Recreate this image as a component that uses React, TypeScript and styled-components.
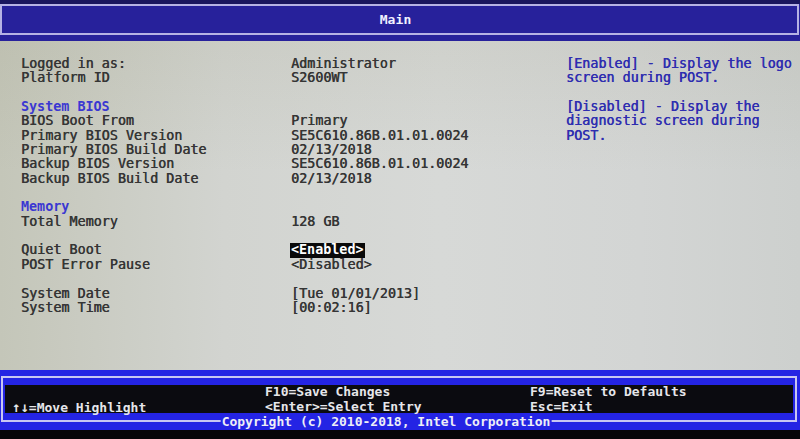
import React from "react";
import styled, { createGlobalStyle } from "styled-components";

const Global = createGlobalStyle`
  html, body { margin: 0; padding: 0; background: #000; }
  body { width: 800px; height: 439px; overflow: hidden; }
`;

const Screen = styled.div`
  width: 800px;
  height: 439px;
  display: flex;
  flex-direction: column;
  background: #000;
  font-family: "DejaVu Sans Mono", "Liberation Mono", monospace;
`;

const TopBar = styled.header`
  flex: none;
  background: #27219b;
  border-top: 4px solid #1a165e;
  padding: 0 1px 6px 0;
`;

const TitleFrame = styled.div`
  height: 27px;
  border: 2px solid #b6b2e4;
  display: flex;
  align-items: center;
  justify-content: center;
  padding-right: 8px;
`;

const Title = styled.h1`
  margin: 0;
  font-size: 13px;
  font-weight: bold;
  color: #f2f2ff;
  letter-spacing: 0.1px;
`;

const Content = styled.main`
  flex: 1;
  display: flex;
  padding-top: 16px;
  background:
    linear-gradient(180deg, rgba(150, 150, 120, 0.12) 0%, rgba(255, 255, 255, 0) 40%),
    linear-gradient(90deg, #c4c6b9 0%, #d2d4d0 28%, #d7d9d7 55%, #d3d5d4 80%, #cdd0ce 100%);
  font-size: 13.4px;
  text-shadow: 0.4px 0 currentColor;
`;

const MainColumn = styled.section`
  width: 545px;
  padding-left: 21px;
  box-sizing: border-box;
`;

const Row = styled.div`
  display: grid;
  grid-template-columns: 270px auto;
  height: 14.35px;
  line-height: 14.35px;
  color: #353535;
  white-space: pre;
`;

const Spacer = styled.div`
  height: 14.35px;
`;

const SectionTitle = styled.div`
  height: 14.35px;
  line-height: 14.35px;
  color: #3b38d2;
  font-weight: bold;
  text-shadow: none;
`;

const Value = styled.span<{ $selected?: boolean }>`
  justify-self: start;
  ${(p) =>
    p.$selected
      ? `background: #0a0a0a; color: #ffffff; font-weight: bold; padding: 0 1px; margin-left: -1px; text-shadow: none;`
      : ``}
`;

const HelpColumn = styled.aside`
  flex: 1;
  padding-left: 21px;
  color: #2e2db0;
`;

const HelpLine = styled.div`
  height: 14.35px;
  line-height: 14.35px;
  white-space: pre;
`;

const Footer = styled.footer`
  flex: none;
  background: #2424e4;
  padding: 6px 3px 8px 1px;
`;

const Frame = styled.div`
  position: relative;
  border: 2px solid #c8c6f2;
  padding: 7px 2px 7px 2px;
`;

const KeyPanel = styled.div`
  height: 28px;
  background: #0b0b10;
  display: grid;
  grid-template-columns: 253px 265px auto;
  padding-left: 7px;
  font-size: 13px;
  font-weight: bold;
  color: #e6e6ea;
`;

const KeyColumn = styled.div<{ $shift?: number }>`
  display: flex;
  flex-direction: column;
  justify-content: flex-end;
  margin-top: ${(p) => p.$shift ?? 0}px;
`;

const KeyLine = styled.div`
  height: 14.5px;
  line-height: 14.5px;
  white-space: pre;
`;

const Arrows = styled.span`
  font-size: 14px;
`;

const Copyright = styled.div`
  position: absolute;
  left: calc(50% - 13px);
  bottom: -9px;
  transform: translateX(-50%);
  background: #2424e4;
  padding: 0 1px;
  font-size: 13px;
  font-weight: bold;
  line-height: 14px;
  color: #eeeef6;
  white-space: pre;
`;

const BottomEdge = styled.div`
  flex: none;
  height: 9px;
  background: #050508;
`;

type Item =
  | { kind: "row"; label: string; value: string; selected?: boolean }
  | { kind: "section"; title: string }
  | { kind: "gap" };

const items: Item[] = [
  { kind: "row", label: "Logged in as:", value: "Administrator" },
  { kind: "row", label: "Platform ID", value: "S2600WT" },
  { kind: "gap" },
  { kind: "section", title: "System BIOS" },
  { kind: "row", label: "BIOS Boot From", value: "Primary" },
  { kind: "row", label: "Primary BIOS Version", value: "SE5C610.86B.01.01.0024" },
  { kind: "row", label: "Primary BIOS Build Date", value: "02/13/2018" },
  { kind: "row", label: "Backup BIOS Version", value: "SE5C610.86B.01.01.0024" },
  { kind: "row", label: "Backup BIOS Build Date", value: "02/13/2018" },
  { kind: "gap" },
  { kind: "section", title: "Memory" },
  { kind: "row", label: "Total Memory", value: "128 GB" },
  { kind: "gap" },
  { kind: "row", label: "Quiet Boot", value: "<Enabled>", selected: true },
  { kind: "row", label: "POST Error Pause", value: "<Disabled>" },
  { kind: "gap" },
  { kind: "row", label: "System Date", value: "[Tue 01/01/2013]" },
  { kind: "row", label: "System Time", value: "[00:02:16]" },
];

const help = [
  "[Enabled] - Display the logo",
  "screen during POST.",
  "",
  "[Disabled] - Display the",
  "diagnostic screen during",
  "POST.",
];

export default function App() {
  return (
    <Screen>
      <Global />
      <TopBar>
        <TitleFrame>
          <Title>Main</Title>
        </TitleFrame>
      </TopBar>
      <Content>
        <MainColumn>
          {items.map((it, i) => {
            if (it.kind === "gap") return <Spacer key={i} />;
            if (it.kind === "section") return <SectionTitle key={i}>{it.title}</SectionTitle>;
            return (
              <Row key={i}>
                <span>{it.label}</span>
                <Value $selected={it.selected}>{it.value}</Value>
              </Row>
            );
          })}
        </MainColumn>
        <HelpColumn>
          {help.map((h, i) => (
            <HelpLine key={i}>{h}</HelpLine>
          ))}
        </HelpColumn>
      </Content>
      <Footer>
        <Frame>
          <KeyPanel>
            <KeyColumn>
              <KeyLine>
                <Arrows>↑↓</Arrows>=Move Highlight
              </KeyLine>
            </KeyColumn>
            <KeyColumn>
              <KeyLine>F10=Save Changes</KeyLine>
              <KeyLine>&lt;Enter&gt;=Select Entry</KeyLine>
            </KeyColumn>
            <KeyColumn $shift={-3}>
              <KeyLine>F9=Reset to Defaults</KeyLine>
              <KeyLine>Esc=Exit</KeyLine>
            </KeyColumn>
          </KeyPanel>
          <Copyright>Copyright (c) 2010-2018, Intel Corporation</Copyright>
        </Frame>
      </Footer>
      <BottomEdge />
    </Screen>
  );
}
